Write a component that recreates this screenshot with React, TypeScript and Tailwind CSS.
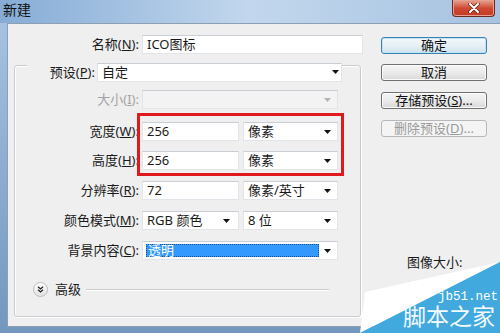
import React from "react";

const Arrow = ({ disabled }: { disabled?: boolean }) => (
  <svg width="7" height="4" viewBox="0 0 7 4" className="shrink-0">
    <path d="M0 0H7L3.5 4Z" fill={disabled ? "#b4b4b4" : "#111"} />
  </svg>
);

const Field = ({ w, children, combo, disabled, pr = "pr-[5px]" }: { w: string; children?: React.ReactNode; combo?: boolean; disabled?: boolean; pr?: string }) => (
  <div
    className={`${w} h-[19px] flex items-center justify-between pl-[4px] ${pr} border border-[#e1e5ea] border-t-[#c9cdd4] ${disabled ? "bg-[#f3f3f3]" : "bg-white"} text-[13px] leading-none text-[#1a1a1a]`}
  >
    <span className="flex items-center">{children}</span>
    {combo && <Arrow disabled={disabled} />}
  </div>
);

const Label = ({ w = "w-[125px]", children, disabled }: { w?: string; children: React.ReactNode; disabled?: boolean }) => (
  <div className={`${w} shrink-0 text-right pr-[1px] text-[13px] leading-none ${disabled ? "text-[#a3a3a3]" : "text-[#1a1a1a]"}`}>{children}</div>
);

const Btn = ({ children, kind }: { children: React.ReactNode; kind?: "default" | "disabled" }) => {
  const cls =
    kind === "default"
      ? "border-[#3c7fb1] bg-gradient-to-b from-[#f4f9fc] via-[#e6f0f6] to-[#cfe3ee] shadow-[inset_0_0_0_1px_#bfe6f7] text-[#111]"
      : kind === "disabled"
      ? "border-[#b5b9bc] bg-[#f4f4f4] text-[#9a9a9a]"
      : "border-[#707070] bg-gradient-to-b from-[#f4f4f4] via-[#ebebeb] to-[#d8d8d8] shadow-[inset_0_0_0_1px_#fbfbfb] text-[#111]";
  return (
    <div className={`w-[106px] h-[17px] rounded-[3px] border ${cls} flex items-center justify-center text-[13px] leading-none`}>
      {children}
    </div>
  );
};

export default function App() {
  return (
    <div className="w-[500px] h-[333px] relative overflow-hidden flex flex-col bg-gradient-to-b from-[#a8c5e3] to-[#7397bd] font-['Noto_Sans','Noto_Sans_CJK_SC',sans-serif]">
      {/* title bar */}
      <div className="h-[23px] shrink-0 flex items-start bg-gradient-to-r from-[#86acd6] via-[#c2d7ed] to-[#a7c3e1]">
        <div className="ml-[3px] mt-[2px] text-[14px] leading-[16px] text-[#111]">新建</div>
        <div className="ml-auto mr-[5px] w-[43px] h-[17px] rounded-b-[4px] border border-t-0 border-[#6b2a20] bg-gradient-to-b from-[#e6a392] via-[#cf4a33] to-[#c23a22] shadow-[inset_0_0_0_1px_#eaa090] flex items-center justify-center">
          <svg width="12" height="10" viewBox="0 0 12 10">
            <path d="M2 1L10 9M10 1L2 9" stroke="#5a2318" strokeWidth="3.4" strokeLinecap="round" />
            <path d="M2 1L10 9M10 1L2 9" stroke="#fff" strokeWidth="2" strokeLinecap="round" />
          </svg>
        </div>
      </div>

      {/* body */}
      <div className="flex-1 ml-[7px] mb-[6px] bg-[#efefef] border-l border-t border-b border-[#8c9fb3] flex">
        {/* left column */}
        <div className="w-[373px] shrink-0 flex flex-col">
          <div className="mt-[11px] flex items-center">
            <Label w="w-[132px]">
              名称(<u>N</u>):
            </Label>
            <div className="ml-[2px]">
              <Field w="w-[221px]">ICO图标</Field>
            </div>
          </div>

          {/* group box */}
          <div className="mt-[11px] ml-[6px] w-[347px] h-[252px] rounded-[3px] border border-[#c7cdd2] shadow-[inset_1px_1px_0_#fff,1px_1px_0_#fff] flex flex-col">
            <div className="-mt-[4px] h-[20px] flex items-center">
              <div className="ml-[12px] w-[70px] h-[20px] bg-[#efefef] flex items-center justify-end pr-[2px] text-[13px] leading-none text-[#1a1a1a]">
                预设(<u>P</u>):
              </div>
              <Field w="w-[245px]" combo pr="pr-[2px]">
                自定
              </Field>
            </div>

            <div className="mt-[8px] flex items-center">
              <Label disabled>
                大小(<u>I</u>):
              </Label>
              <div className="ml-[2px]">
                <Field w="w-[196px]" combo disabled pr="pr-[6px]" />
              </div>
            </div>

            <div className="mt-[13px] flex items-center">
              <Label>
                宽度(<u>W</u>):
              </Label>
              <div className="ml-[2px] flex gap-[4px]">
                <Field w="w-[97px]">256</Field>
                <Field w="w-[95px]" combo pr="pr-[6px]">
                  像素
                </Field>
              </div>
            </div>

            <div className="mt-[10px] flex items-center">
              <Label>
                高度(<u>H</u>):
              </Label>
              <div className="ml-[2px] flex gap-[4px]">
                <Field w="w-[97px]">256</Field>
                <Field w="w-[95px]" combo pr="pr-[6px]">
                  像素
                </Field>
              </div>
            </div>

            <div className="mt-[11px] flex items-center">
              <Label>
                分辨率(<u>R</u>):
              </Label>
              <div className="ml-[2px] flex gap-[4px]">
                <Field w="w-[97px]">72</Field>
                <Field w="w-[95px]" combo pr="pr-[6px]">
                  像素/英寸
                </Field>
              </div>
            </div>

            <div className="mt-[11px] flex items-center">
              <Label>
                颜色模式(<u>M</u>):
              </Label>
              <div className="ml-[2px] flex gap-[4px]">
                <Field w="w-[97px]" combo pr="pr-[8px]">
                  RGB 颜色
                </Field>
                <Field w="w-[95px]" combo pr="pr-[6px]">
                  8 位
                </Field>
              </div>
            </div>

            <div className="mt-[11px] flex items-center">
              <Label>
                背景内容(<u>C</u>):
              </Label>
              <div className="ml-[2px] w-[196px] h-[19px] flex items-center bg-white border border-[#e1e5ea] border-t-[#c9cdd4] pl-[3px] pr-[6px]">
                <div className="w-[173px] h-[13px] bg-[#3399ff] border border-dotted border-[#1a4f8a] flex items-center pl-[1px] text-[13px] leading-none text-white">
                  透明
                </div>
                <div className="ml-auto">
                  <Arrow />
                </div>
              </div>
            </div>

            <div className="mt-[22px] flex items-center">
              <div className="ml-[18px] w-[15px] h-[15px] rounded-full border border-[#b9bcc0] bg-gradient-to-b from-[#ffffff] to-[#e2e2e2] flex items-center justify-center">
                <svg width="7" height="7" viewBox="0 0 7 7">
                  <path d="M1 0.8L3.5 3L6 0.8M1 3.8L3.5 6L6 3.8" stroke="#222" strokeWidth="1.3" fill="none" />
                </svg>
              </div>
              <div className="ml-[7px] text-[13px] leading-none text-[#1a1a1a]">高级</div>
              <div className="ml-[5px] w-[243px] h-[2px] border-t border-[#cdcdcd] border-b border-b-white" />
            </div>
          </div>
        </div>

        {/* right column */}
        <div className="pt-[13px] flex flex-col">
          <Btn kind="default">确定</Btn>
          <div className="mt-[10px]">
            <Btn>取消</Btn>
          </div>
          <div className="mt-[11px]">
            <Btn>
              存储预设(<u>S</u>)...
            </Btn>
          </div>
          <div className="mt-[11px]">
            <Btn kind="disabled">
              删除预设(<u>D</u>)...
            </Btn>
          </div>
          <div className="mt-[118px] ml-[26px] text-[13px] leading-[14px] text-[#1a1a1a]">图像大小:</div>
        </div>
      </div>

      {/* red annotation box */}
      <div className="absolute left-[137px] top-[113px] w-[207px] h-[63px] border-[3px] border-[#e0191f]" />

      {/* watermark */}
      <div className="absolute left-[358px] top-[262px] w-[142px] h-[71px]">
        <svg width="142" height="71" viewBox="0 0 142 71" className="absolute left-0 top-0">
          <polygon points="7,30 142,0 2,71" fill="#ffffff" />
          <polygon points="2,71 142,0 142,71" fill="#41a9de" />
        </svg>
        <span className="absolute left-[80px] top-[29px] text-[12.5px] leading-[12px] text-white font-['Liberation_Mono',monospace]">jb51.net</span>
        <span className="absolute left-[45px] top-[42px] text-[23px] leading-[23px] text-[#f4fbff] font-['Noto_Sans_CJK_SC',sans-serif]">脚本之家</span>
      </div>
    </div>
  );
}
